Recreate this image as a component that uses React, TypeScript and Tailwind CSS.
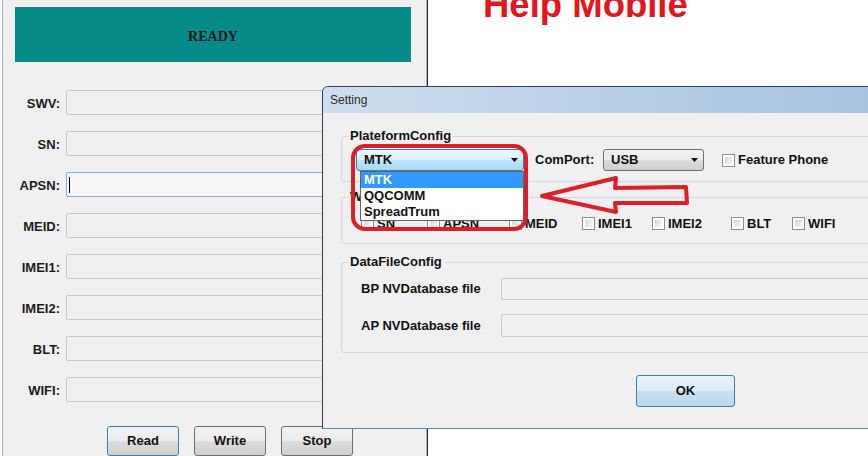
import clsx from "clsx";

const FIELDS = ["SWV:", "SN:", "APSN:", "MEID:", "IMEI1:", "IMEI2:", "BLT:", "WIFI:"];

const WRITE_ITEMS: { label: string; width: string }[] = [
  { label: "SN", width: "w-[66px]" },
  { label: "APSN", width: "w-[82px]" },
  { label: "MEID", width: "w-[73px]" },
  { label: "IMEI1", width: "w-[70px]" },
  { label: "IMEI2", width: "w-[79px]" },
  { label: "BLT", width: "w-[61px]" },
  { label: "WIFI", width: "w-[70px]" },
];

const winButton =
  "bg-[linear-gradient(to_bottom,#f2f2f2_0%,#ebebeb_50%,#dddddd_51%,#cfcfcf_100%)]";
const focusButton =
  "bg-[linear-gradient(to_bottom,#eaf6fd_0%,#d9f0fc_50%,#bee6fd_51%,#a7d9f5_100%)]";

function Field({ label, active }: { label: string; active?: boolean }) {
  return (
    <div className="flex h-[25px] items-center">
      <span className="w-[57px] pt-[2px] text-right text-[13px] font-bold text-[#1b1b1b]">{label}</span>
      <div
        className={clsx(
          "ml-[6px] h-full w-[344px] rounded-[2px] border",
          active ? "border-[#86aed3] bg-[#f6f6f6]" : "border-[#c9c9c9] bg-[#f0f0f0]",
        )}
      >
        {active ? <span className="ml-[2px] mt-[4px] block h-[16px] w-px bg-black" /> : null}
      </div>
    </div>
  );
}

function Checkbox() {
  return (
    <span className="block size-[13px] shrink-0 border border-[#8f8f8f] bg-white p-[2px]">
      <span className="block size-full bg-[linear-gradient(135deg,#d6d6d6,#f8f8f8)]" />
    </span>
  );
}

function Caret() {
  return (
    <svg width="7" height="4" viewBox="0 0 7 4" className="shrink-0">
      <polygon points="0,0 7,0 3.5,4" fill="#111" />
    </svg>
  );
}

function Combo({ value, width, focused }: { value: string; width: string; focused?: boolean }) {
  return (
    <div
      className={clsx(
        "flex h-[22px] items-center justify-between rounded-[3px] border pl-[7px] pr-[5px]",
        width,
        focused ? "border-[#3c7fb1] " + focusButton : "border-[#707070] " + winButton,
      )}
    >
      <span className="text-[13px] font-bold text-[#111]">{value}</span>
      <Caret />
    </div>
  );
}

function Group({
  title,
  className,
  children,
}: {
  title: string;
  className: string;
  children: React.ReactNode;
}) {
  return (
    <fieldset className={clsx("w-[560px] rounded-[3px] border border-[#d3d9de] px-[6px]", className)}>
      <legend className="px-[2px] text-[13px] font-bold leading-[16px] text-[#111]">{title}</legend>
      {children}
    </fieldset>
  );
}

function SettingDialog() {
  return (
    <div className="absolute left-[322px] top-[86px] h-[343px] w-[580px] overflow-hidden rounded-tl-[6px] border border-[#34424f] border-b-[#5e8c9c] bg-[#f0f0f0]">
      <div className="flex h-[26px] items-center bg-[linear-gradient(to_right,#cfdeee,#b8cfe7_50%,#a6c2e0)] pl-[7px] text-[12px] text-[#2a2a2a]">
        Setting
      </div>
      <div className="flex flex-col pl-[18px] pt-[15px]">
        <Group title="PlateformConfig" className="h-[54px]">
          <div className="mt-[5px] flex items-center">
            <div className="ml-[8px]">
              <Combo value="MTK" width="w-[168px]" focused />
            </div>
            <span className="ml-[11px] w-[68px] text-[13px] font-bold text-[#111]">ComPort:</span>
            <Combo value="USB" width="w-[101px]" />
            <div className="ml-[18px] flex items-center gap-[3px]">
              <Checkbox />
              <span className="text-[13px] font-bold text-[#111]">Feature Phone</span>
            </div>
          </div>
        </Group>
        <Group title="WriteConfig" className="mt-[7px] h-[55px]">
          <div className="mt-[9px] flex items-center pl-[13px]">
            {WRITE_ITEMS.map((item) => (
              <div key={item.label} className={clsx("flex shrink-0 items-center gap-[3px]", item.width)}>
                <Checkbox />
                <span className="text-[13px] font-bold text-[#111]">{item.label}</span>
              </div>
            ))}
          </div>
        </Group>
        <Group title="DataFileConfig" className="mt-[10px] h-[99px]">
          <div className="mt-[8px] flex h-[22px] items-center pl-[13px]">
            <span className="w-[140px] text-[13px] font-bold text-[#111]">BP NVDatabase file</span>
            <div className="h-full w-[400px] rounded-[2px] border border-[#cacaca] bg-[#f0f0f0]" />
          </div>
          <div className="mt-[14px] flex h-[23px] items-center pl-[13px]">
            <span className="w-[140px] text-[13px] font-bold text-[#111]">AP NVDatabase file</span>
            <div className="h-full w-[400px] rounded-[2px] border border-[#cacaca] bg-[#f0f0f0]" />
          </div>
        </Group>
        <button
          type="button"
          className={clsx(
            "ml-[295px] mt-[22px] h-[32px] w-[99px] rounded-[3px] border border-[#3c7fb1] text-[13px] font-bold text-[#111]",
            "bg-[linear-gradient(to_bottom,#e9f3fa_0%,#dcebf6_50%,#c9e0f0_51%,#bcd8ec_100%)]",
          )}
        >
          OK
        </button>
      </div>
    </div>
  );
}

export default function App() {
  return (
    <div className="relative flex h-[456px] w-[868px] overflow-hidden bg-white font-['Liberation_Sans',Arial,sans-serif]">
      <div className="ml-[2px] flex h-full w-[426px] shrink-0 flex-col border-x border-l-[#a9b1b9] border-r-[#1f2a33] bg-[#f0f0f0] shadow-[inset_-1px_0_0_#9fb8c6]">
        <div className="ml-[12px] mt-[7px] flex h-[58px] w-[396px] items-center justify-center bg-[#078b88] pt-[3px]">
          <span className="font-['Liberation_Serif','Times_New_Roman',serif] text-[14px] font-bold text-[#1a1a1a]">
            READY
          </span>
        </div>
        <div className="mt-[28px] flex flex-col gap-[16px]">
          {FIELDS.map((label) => (
            <Field key={label} label={label} active={label === "APSN:"} />
          ))}
        </div>
        <div className="ml-[104px] mt-[24px] flex gap-[15px]">
          {["Read", "Write", "Stop"].map((label) => (
            <button
              key={label}
              type="button"
              className={clsx(
                "h-[30px] w-[72px] shrink-0 rounded-[3px] border text-[13px] font-bold text-[#111]",
                label === "Read" ? "border-[#3c7fb1]" : "border-[#707070]",
                winButton,
              )}
            >
              {label}
            </button>
          ))}
        </div>
      </div>
      <div className="flex-1 bg-white">
        <p className="ml-[55px] -mt-[13px] text-[36.5px] font-bold leading-none text-[#e3151d]">Help Mobile</p>
      </div>

      <SettingDialog />

      {/* open combo list */}
      <div className="absolute left-[360px] top-[171px] w-[164px] border border-[#646464] bg-white text-[13px] font-bold leading-[16px] text-[#111]">
        <div className="bg-[#3399ff] pl-[3px] text-white">MTK</div>
        <div className="pl-[3px]">QQCOMM</div>
        <div className="pl-[3px]">SpreadTrum</div>
      </div>

      {/* red annotations */}
      <div className="absolute left-[351px] top-[144px] h-[87px] w-[177px] rounded-[14px] border-4 border-[#dc1f2b]" />
      <svg className="absolute left-[530px] top-[172px]" width="165" height="46" viewBox="0 0 165 46">
        <polygon
          points="12,24 86,6 85,16 156,15 157,31 85,31 86,40"
          fill="none"
          stroke="#dc1f2b"
          strokeWidth="4"
          strokeLinejoin="round"
        />
      </svg>
    </div>
  );
}
